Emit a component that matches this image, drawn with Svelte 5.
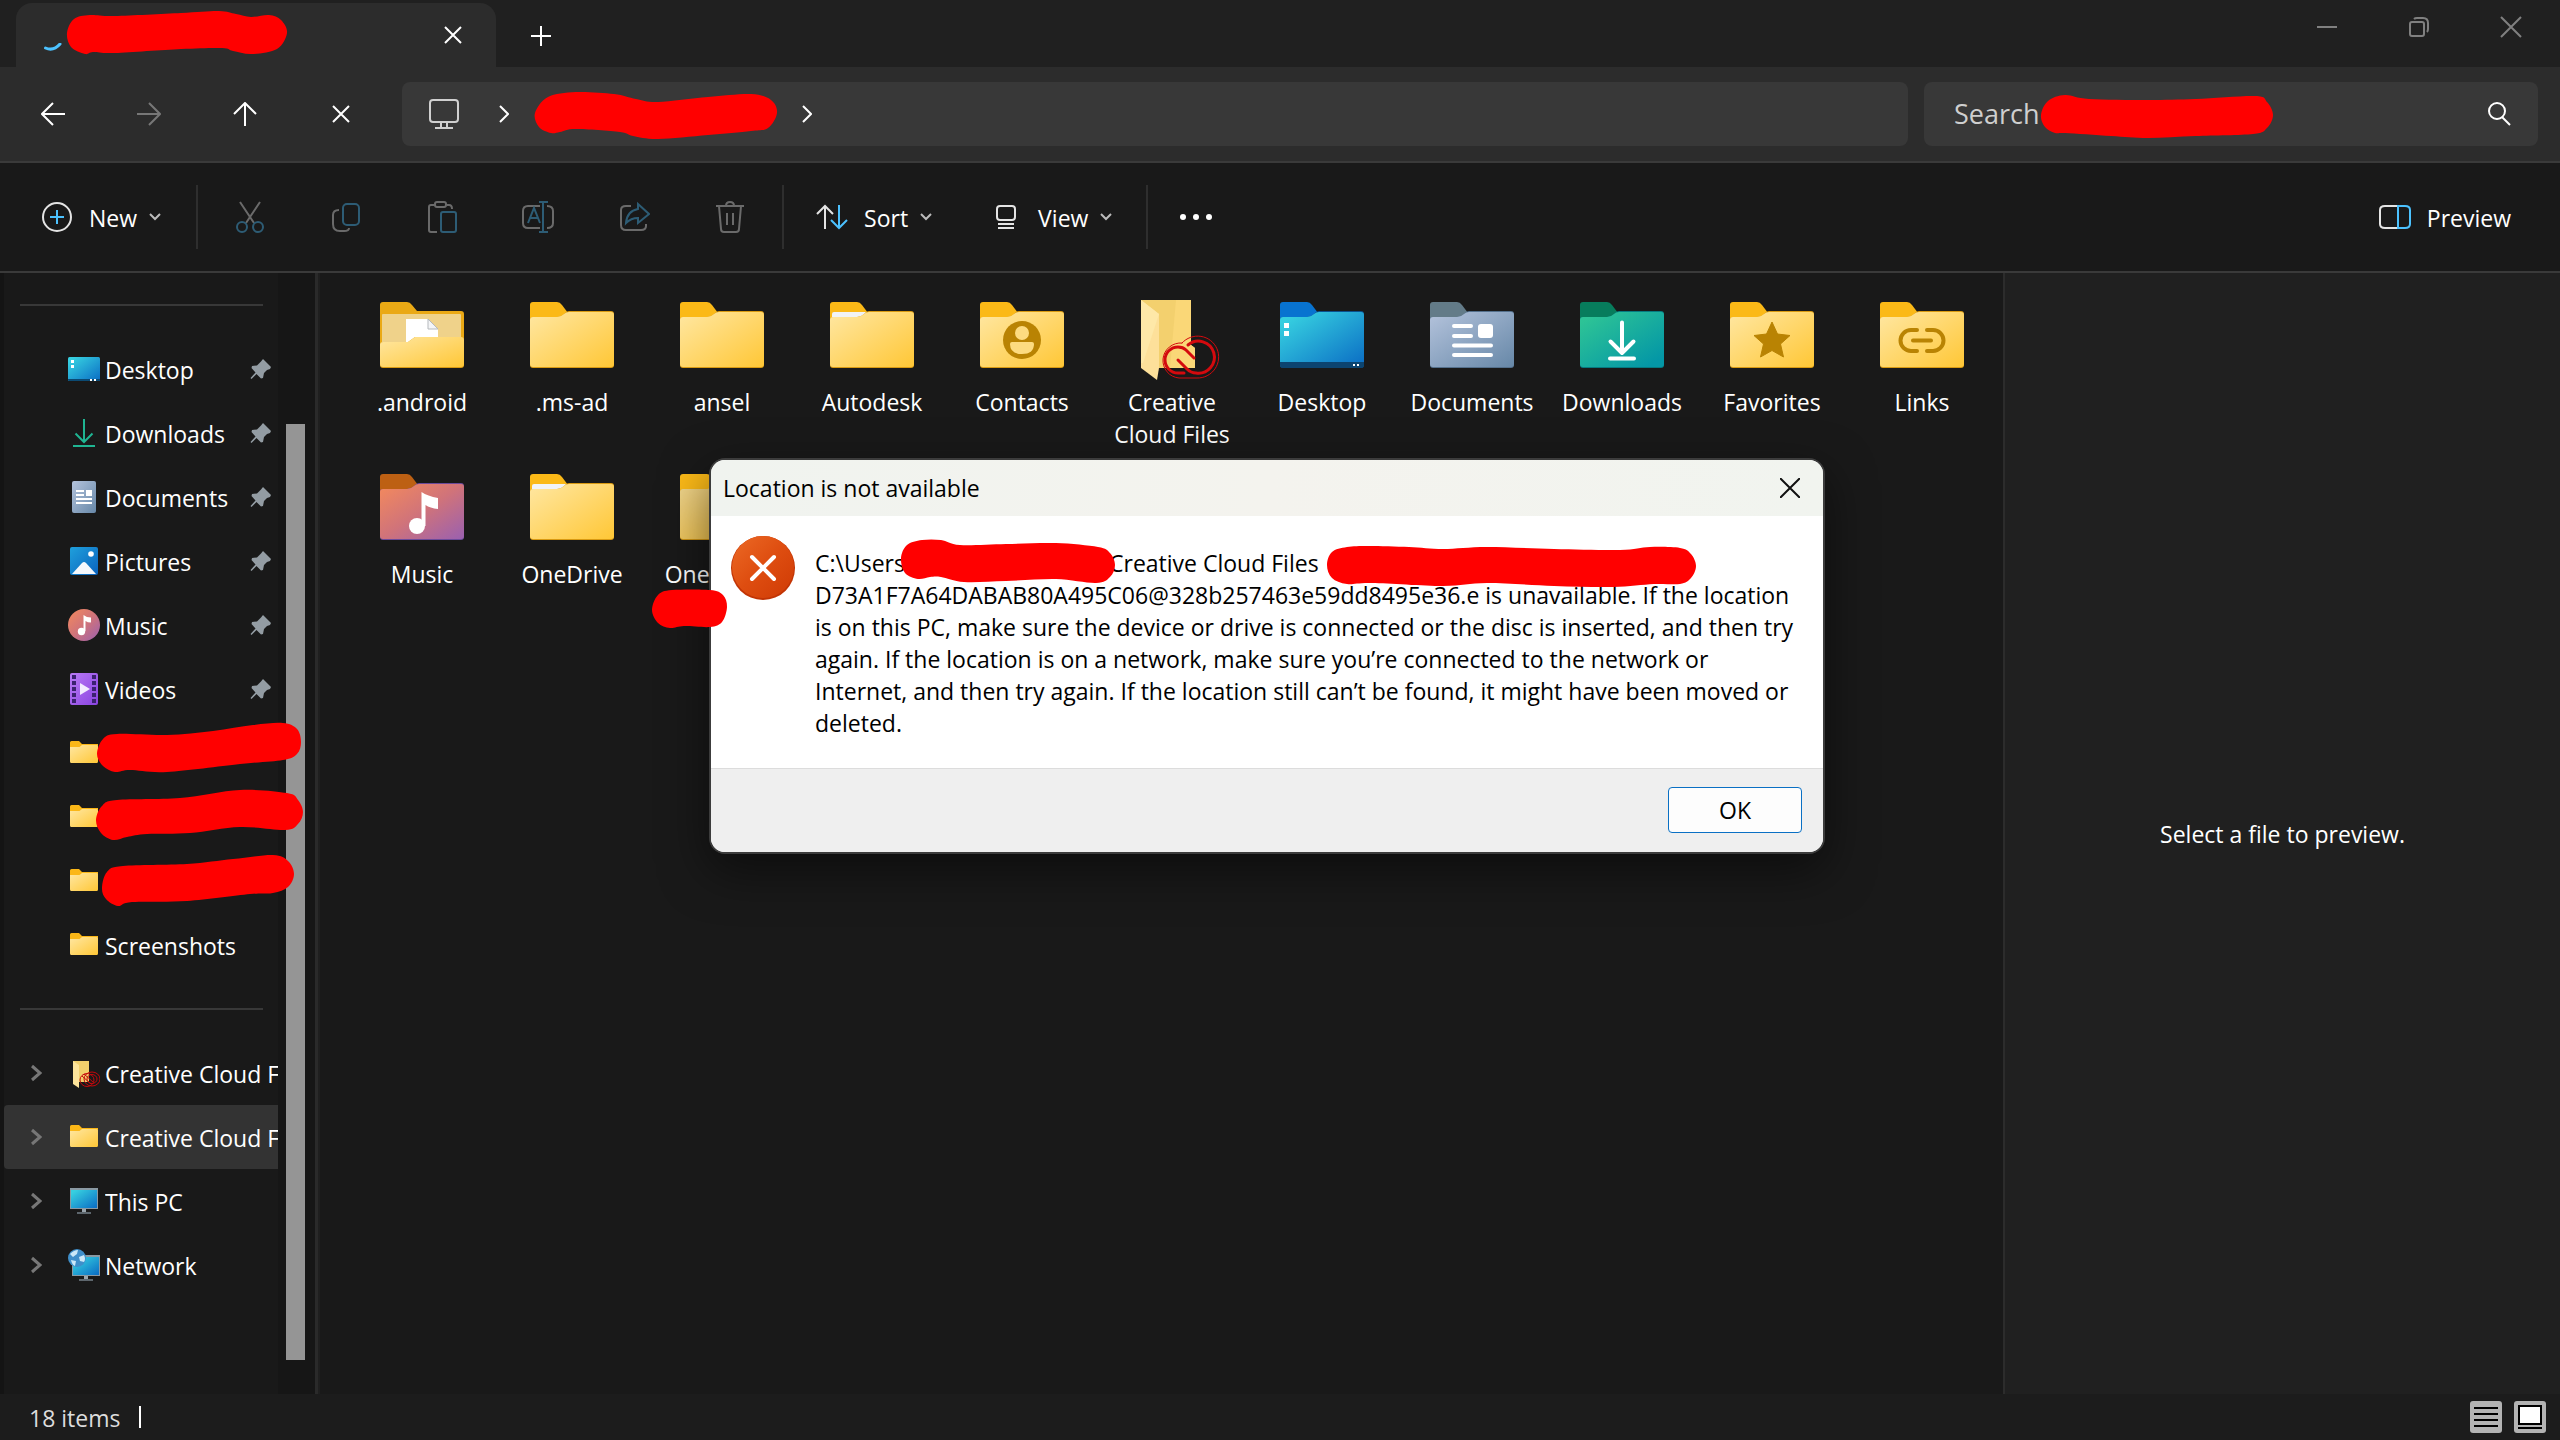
<script>
  let selected = $state("cc2");
  let showDialog = $state(true);

  const pinned = [
    { id: "desktop", label: "Desktop", icon: "desktop", pin: true },
    { id: "downloads", label: "Downloads", icon: "downloads", pin: true },
    { id: "documents", label: "Documents", icon: "documents", pin: true },
    { id: "pictures", label: "Pictures", icon: "pictures", pin: true },
    { id: "music", label: "Music", icon: "music", pin: true },
    { id: "videos", label: "Videos", icon: "videos", pin: true },
    { id: "hidden1", label: "", icon: "folder" },
    { id: "hidden2", label: "", icon: "folder" },
    { id: "hidden3", label: "", icon: "folder" },
    { id: "screenshots", label: "Screenshots", icon: "folder" },
  ];

  const drives = [
    { id: "cc1", label: "Creative Cloud Files", icon: "cloud" },
    { id: "cc2", label: "Creative Cloud Files", icon: "folder" },
    { id: "pc", label: "This PC", icon: "pc" },
    { id: "network", label: "Network", icon: "network" },
  ];

  const files = [
    { name: ".android", icon: "open" },
    { name: ".ms-ad", icon: "plain" },
    { name: "ansel", icon: "plain" },
    { name: "Autodesk", icon: "paper" },
    { name: "Contacts", icon: "contacts" },
    { name: "Creative Cloud Files", icon: "cloud" },
    { name: "Desktop", icon: "desktop" },
    { name: "Documents", icon: "documents" },
    { name: "Downloads", icon: "downloads" },
    { name: "Favorites", icon: "favorites" },
    { name: "Links", icon: "links" },
    { name: "Music", icon: "music" },
    { name: "OneDrive", icon: "paper" },
    { name: "OneDrive -", icon: "shade" },
  ];

  const folderColors = {
    desktop: ["#0873d0", "url(#g-desktop)", "#0a4f8c"],
    documents: ["#637b88", "url(#g-documents)", "#54708c"],
    downloads: ["#077c5c", "url(#g-downloads)", "#057a80"],
    music: ["#bd6013", "url(#g-music)", "#6b4a9a"],
  };

  // red marker strokes, outline points going clockwise
  const strokes = [
    [[67, 33], [74, 19], [90, 15], [115, 16], [181, 13], [219, 11], [236, 14], [251, 17], [269, 15], [281, 20], [287, 33], [277, 49], [252, 54], [233, 51], [222, 48], [181, 49], [115, 53], [93, 52], [85, 54], [71, 47]],
    [[535, 113], [548, 97], [576, 92], [614, 94], [636, 99], [658, 102], [708, 97], [751, 94], [771, 100], [777, 113], [768, 128], [751, 131], [708, 135], [658, 139], [633, 136], [620, 132], [576, 129], [560, 132], [551, 133], [539, 127]],
    [[2041, 115], [2048, 101], [2065, 95], [2089, 99], [2148, 100], [2196, 99], [2255, 96], [2267, 102], [2273, 115], [2267, 128], [2253, 134], [2196, 136], [2148, 138], [2111, 136], [2065, 133], [2055, 133], [2045, 127]],
    [[97, 754], [103, 739], [117, 734], [167, 735], [213, 731], [253, 725], [283, 723], [297, 729], [301, 742], [297, 754], [283, 760], [240, 764], [167, 772], [130, 770], [115, 772], [103, 766]],
    [[96, 820], [102, 806], [117, 800], [180, 798], [240, 790], [287, 793], [298, 800], [303, 812], [298, 824], [285, 830], [240, 827], [190, 833], [147, 834], [127, 837], [113, 840], [101, 833]],
    [[102, 888], [107, 872], [123, 866], [187, 864], [233, 859], [273, 855], [288, 861], [294, 874], [288, 887], [273, 893], [250, 894], [187, 901], [132, 902], [118, 906], [106, 899]],
    [[652, 610], [658, 595], [672, 590], [710, 590], [723, 595], [727, 607], [722, 622], [710, 627], [684, 626], [670, 628], [658, 623]],
    [[901, 558], [907, 545], [922, 540], [941, 540], [960, 545], [1006, 544], [1056, 543], [1098, 547], [1110, 553], [1115, 565], [1110, 577], [1096, 583], [1056, 579], [1006, 581], [964, 582], [941, 577], [930, 577], [918, 579], [905, 573]],
    [[1327, 565], [1332, 552], [1347, 547], [1369, 546], [1409, 547], [1443, 549], [1487, 547], [1554, 549], [1620, 550], [1650, 547], [1680, 548], [1691, 554], [1696, 566], [1691, 578], [1680, 584], [1654, 584], [1613, 587], [1554, 586], [1487, 583], [1443, 586], [1372, 583], [1347, 584], [1332, 578]],
  ];

  // closed Catmull-Rom curve through the points
  function smooth(pts) {
    const n = pts.length;
    let d = `M${pts[0]}`;
    for (let i = 0; i < n; i++) {
      const [a, b, c, e] = [pts[(i + n - 1) % n], pts[i], pts[(i + 1) % n], pts[(i + 2) % n]];
      const c1 = [b[0] + (c[0] - a[0]) / 6, b[1] + (c[1] - a[1]) / 6];
      const c2 = [c[0] - (e[0] - b[0]) / 6, c[1] - (e[1] - b[1]) / 6];
      d += `C${c1} ${c2} ${c}`;
    }
    return d + "Z";
  }
</script>

<svelte:head>
  <title>File Explorer</title>
</svelte:head>

{#snippet chevronDown()}
  <svg class="caret" viewBox="0 0 12 8"><path d="M1 1l5 5 5-5" /></svg>
{/snippet}

{#snippet sideIcon(kind)}
  <svg class="side-icon" viewBox="0 0 32 32">
    {#if kind === "desktop"}
      <rect y="4" width="32" height="24" rx="1.5" fill="url(#g-desktop)" />
      <path d="M0 26h32v.5a1.500 1.500 0 0 1-1.500 1.500h-29A1.500 1.500 0 0 1 0 26.500z" fill="#0b4a73" />
      <path d="M3 7h3v3H3zM3 12h3v3H3zM22 26h2v2h-2zM26 26h2v2h-2z" fill="#fff" />
    {:else if kind === "downloads"}
      <path d="M16 2v22M7.500 16.500L16 25l8.500-8.500M5 29h22" fill="none" stroke="#1fb592" stroke-width="2" />
    {:else if kind === "documents"}
      <rect x="4" width="24" height="32" rx="2" fill="url(#g-documents)" />
      <path d="M8 9h8v2H8zM8 13h8v2H8zM18 9h6v6h-6zM8 17h16v2H8zM8 21h16v2H8z" fill="#fff" />
    {:else if kind === "pictures"}
      <rect x="2" y="2" width="28" height="28" rx="2" fill="url(#g-pictures)" />
      <path d="M4 29l10-11q2-2 4 0l10 11z" fill="#f4f8fc" />
      <circle cx="23" cy="9" r="2.800" fill="#fff" />
    {:else if kind === "music"}
      <circle cx="16" cy="16" r="16" fill="url(#g-music)" />
      <circle cx="13.500" cy="22.500" r="3.700" fill="#fff" />
      <path d="M15.500 22V6q3 2.500 7.500 2.500v5q-3.500 0-5.500-1.500v10z" fill="#fff" />
    {:else if kind === "videos"}
      <rect x="2" width="28" height="32" rx="2" fill="url(#g-videos)" />
      <path d="M4 2h4v4H4zM4 8h4v4H4zM4 14h4v4H4zM4 20h4v4H4zM4 26h4v4H4zM24 2h4v4h-4zM24 8h4v4h-4zM24 14h4v4h-4zM24 20h4v4h-4zM24 26h4v4h-4z" fill="#3b2170" />
      <path d="M12 10l10 6-10 6z" fill="#f3ecff" />
    {:else if kind === "cloud"}
      <path d="M5 4h16v21H5z" fill="#f1cf6c" />
      <path d="M5 4l6 4v23l-6-4z" fill="#fde49b" />
      <g fill="none" stroke="#c4080c" stroke-width="1">
        <ellipse cx="19" cy="23" rx="7" ry="6.500" />
        <ellipse cx="24" cy="22" rx="8" ry="7" />
        <ellipse cx="24" cy="22" rx="5" ry="4.500" />
        <path d="M14 19l9 8M16 17l9 8" />
      </g>
    {:else if kind === "pc"}
      <path d="M2 3h28v21H2z" fill="#8a99a3" />
      <path d="M3 5h26v18H3z" fill="url(#g-desktop)" />
      <path d="M14 24h4v3h-4z" fill="#9aa5ad" />
      <path d="M9 27h14v2H9z" fill="#5d666d" />
    {:else if kind === "network"}
      <path d="M4 6h28v21H4z" fill="#8a99a3" />
      <path d="M5 8h26v18H5z" fill="url(#g-desktop)" />
      <path d="M16 27h4v3h-4z" fill="#9aa5ad" />
      <path d="M11 30h14v2H11z" fill="#5d666d" />
      <circle cx="9" cy="9" r="9" fill="#3f8fca" />
      <path d="M2 5q4-4 8-4l-1 4-4 3zM11 8l5-2q2 4 0 7l-4-1zM3 11l5 1-1 5q-3-1-4-6z" fill="#cbe8f8" />
    {:else}
      <path d="M2 5.500A1.500 1.500 0 0 1 3.500 4H11l3 3h16v6H2z" fill="#fbb717" />
      <path d="M2 10h9.500L14 8h14.500A1.500 1.500 0 0 1 30 9.500v15a1.500 1.500 0 0 1-1.500 1.500h-25A1.500 1.500 0 0 1 2 24.500z" fill="url(#g-folder)" />
    {/if}
  </svg>
{/snippet}

{#snippet fileIcon(kind)}
  {@const [back, front, edge] = folderColors[kind] ?? ["#fbb917", "url(#g-folder)", "#d99a12"]}
  <svg class="file-icon" viewBox="0 0 96 96">
    {#if kind === "cloud"}
      <path d="M17 13h50v45l4 3v20H17z" fill="#f3d06e" />
      <path d="M52 13h15v45l4 3v20H46z" fill="#fad777" />
      <path d="M17 13l18 14v54l-2 12-16-12z" fill="#fde09a" />
      <path d="M17 13l18 14L19 76h-2z" fill="#fee8a8" />
      <g fill="none" stroke="#d40a0e" stroke-linecap="round">
        <path d="M58 56a21 21 0 1 1 15 35H55a17.500 17.500 0 1 1 3-35" stroke-width="1" />
        <path d="M64 58a16 16 0 1 1 8 28q-5 0-9-4L54 73" stroke-width="3" />
        <path d="M70 71l-8-8q-3-3-8-3a12.500 12.500 0 0 0 0 26h6" stroke-width="3" />
      </g>
    {:else if kind === "open"}
      <path d="M6 18a3 3 0 0 1 3-3h24q3 0 5 3l5 6h44a3 3 0 0 1 3 3v51H6z" fill="#eaa915" />
      <path d="M8 28a1 1 0 0 1 1-1h77a1 1 0 0 1 1 1v30H8z" fill="#efd28a" />
      <path d="M32 32h22l10 10v20H32z" fill="#fff" />
      <path d="M54 32v10h10z" fill="#f4f5f6" stroke="#b5b9bd" />
      <path d="M6 58q0-3 3-3h25l7-5h46a3 3 0 0 1 3 3v25a3 3 0 0 1-3 3H9a3 3 0 0 1-3-3z" fill={edge} />
      <path d="M6 58q0-3 3-3h25l7-5h46a3 3 0 0 1 3 3v24a3 3 0 0 1-3 3H9a3 3 0 0 1-3-3z" fill={front} />
    {:else}
      <path d="M6 18a3 3 0 0 1 3-3h24q3 0 5 3l6 8-4 8H6z" fill={back} />
      {#if kind === "paper"}
        <path d="M8 27q0-2 2-2h34l-4 8H8z" fill="#f1f3f6" />
      {/if}
      <path d="M6 33q0-3 3-3h24q4 0 7-3 2-3 5-3h42a3 3 0 0 1 3 3v51a3 3 0 0 1-3 3H9a3 3 0 0 1-3-3z" fill={edge} />
      <path d="M6 33q0-3 3-3h24q4 0 7-3 2-2 5-2h42a3 3 0 0 1 3 3v49a3 3 0 0 1-3 3H9a3 3 0 0 1-3-3z" fill={front} />
      {#if kind === "contacts"}
        <circle cx="48" cy="53" r="19" fill="#b98303" />
        <circle cx="48" cy="46" r="7" fill="#fddb80" />
        <path d="M36 57q0-2 2-2h20q2 0 2 2 0 10-12 10t-12-10z" fill="#fddb80" />
      {:else if kind === "desktop"}
        <path d="M6 75h84v3a3 3 0 0 1-3 3H9a3 3 0 0 1-3-3z" fill="#0c4470" />
        <path d="M10 36h5v5h-5zM10 44h5v5h-5zM79 77h2v2h-2zM83 77h2v2h-2z" fill="#fff" />
      {:else if kind === "documents"}
        <path d="M30 39h17M30 49h17M30 58.500h37M30 68h37" stroke="#fff" stroke-width="4" stroke-linecap="round" />
        <rect x="54" y="37" width="15" height="14" rx="3" fill="#fff" />
      {:else if kind === "downloads"}
        <path d="M48 35.500V66M36.500 54.500L48 66l11.500-11.500M36 71.500h24" fill="none" stroke="#fff" stroke-width="4" stroke-linecap="round" stroke-linejoin="round" />
      {:else if kind === "favorites"}
        <path d="M48 35l5.500 12 12.500 1.500-9.500 8.500 3 13L48 63.500 36.500 70l3-13-9.500-8.500L42.500 47z" fill="#b98303" stroke="#b98303" stroke-linejoin="round" />
      {:else if kind === "links"}
        <path d="M43 43h-6a10.500 10.500 0 0 0 0 21h6M53 43h6a10.500 10.500 0 0 1 0 21h-6M39 53.500h18" fill="none" stroke="#b98303" stroke-width="4" stroke-linecap="round" />
      {:else if kind === "music"}
        <circle cx="43" cy="67" r="8" fill="#fff" />
        <path d="M47.500 67V33q6 4 16.500 6v11q-8-1-12.500-4v21z" fill="#fff" />
      {:else if kind === "shade"}
        <path d="M6 33q0-3 3-3h27v51H9a3 3 0 0 1-3-3z" fill="#8a6a20" opacity=".15" />
      {/if}
    {/if}
  </svg>
{/snippet}

{#snippet navItem(item, expandable)}
  <li>
    <button class="nav-item" class:selected={selected === item.id} onclick={() => (selected = item.id)} aria-label={item.label || "Folder"}>
      <span class="expander">
        {#if expandable}
          <svg viewBox="0 0 14 20"><path d="M2 3l8 7-8 7" /></svg>
        {/if}
      </span>
      {@render sideIcon(item.icon)}
      <span class="nav-label">{item.label}</span>
      {#if item.pin}
        <svg class="pin" viewBox="0 0 22 22"><path d="M13 1l8 8-1 2-3 1-3 3-1 5-2 .5L6.500 16 1.500 21l-1-1 5-5.500L1.500 10l.5-2 5-.5 4-4z" /></svg>
      {/if}
    </button>
  </li>
{/snippet}

<svg class="defs" aria-hidden="true">
  <defs>
    <linearGradient id="g-folder" x1="0" y1="0" x2="1" y2="1">
      <stop offset="0" stop-color="#ffe7a2" /><stop offset="1" stop-color="#ffc736" />
    </linearGradient>
    <linearGradient id="g-desktop" x1="0" y1="0" x2="1" y2="1">
      <stop offset="0.100" stop-color="#36cfe0" /><stop offset="1" stop-color="#0a6cc4" />
    </linearGradient>
    <linearGradient id="g-documents" x1="0" y1="0" x2="1" y2="1">
      <stop offset="0" stop-color="#b4c3dc" /><stop offset="1" stop-color="#6788a8" />
    </linearGradient>
    <linearGradient id="g-downloads" x1="0" y1="0" x2="1" y2="1">
      <stop offset="0.100" stop-color="#2dc396" /><stop offset="0.900" stop-color="#0497a6" />
    </linearGradient>
    <linearGradient id="g-music" x1="0" y1="0" x2="1" y2="1">
      <stop offset="0" stop-color="#f48a5c" /><stop offset="0.500" stop-color="#d0737a" /><stop offset="1" stop-color="#9a60b0" />
    </linearGradient>
    <linearGradient id="g-pictures" x1="0" y1="0" x2="1" y2="1">
      <stop offset="0" stop-color="#1fa0dc" /><stop offset="1" stop-color="#0a62bd" />
    </linearGradient>
    <linearGradient id="g-videos" x1="0" y1="0" x2="1" y2="1">
      <stop offset="0" stop-color="#b97af5" /><stop offset="1" stop-color="#8a44e0" />
    </linearGradient>
    <linearGradient id="g-error" x1="0" y1="0" x2="1" y2="1">
      <stop offset="0" stop-color="#ec6a25" /><stop offset="0.500" stop-color="#de4d10" /><stop offset="1" stop-color="#cf3a05" />
    </linearGradient>
  </defs>
</svg>

<div class="window">
  <header class="titlebar">
    <div class="tab">
      <svg class="spinner" viewBox="0 0 18 8"><path d="M1.500 5q8 3.500 14.500-4" /></svg>
      <button class="tab-close" aria-label="Close tab">
        <svg viewBox="0 0 18 18"><path d="M1 1l16 16M17 1L1 17" /></svg>
      </button>
    </div>
    <button class="new-tab" aria-label="New tab">
      <svg viewBox="0 0 22 22"><path d="M11 1v20M1 11h20" /></svg>
    </button>
    <div class="controls">
      <button aria-label="Minimize"><svg viewBox="0 0 20 20"><path d="M0 10h20" /></svg></button>
      <button aria-label="Restore">
        <svg viewBox="0 0 20 20"><rect x="1" y="5" width="14" height="14" rx="2" /><path d="M5 2q1-1 3-1h6q5 0 5 5v6q0 2-1 3" /></svg>
      </button>
      <button aria-label="Close"><svg viewBox="0 0 20 20"><path d="M0 0l20 20M20 0L0 20" /></svg></button>
    </div>
  </header>

  <nav class="address-row">
    <button aria-label="Back"><svg viewBox="0 0 24 24"><path d="M24 12H1M12 1L1 12l11 11" /></svg></button>
    <button class="off" aria-label="Forward" disabled><svg viewBox="0 0 24 24"><path d="M0 12h23M12 1l11 11-11 11" /></svg></button>
    <button aria-label="Up"><svg viewBox="0 0 24 24"><path d="M12 24V1M1 12L12 1l11 11" /></svg></button>
    <button aria-label="Stop"><svg viewBox="0 0 24 24"><path d="M4 4l16 16M20 4L4 20" /></svg></button>
    <div class="address">
      <svg class="monitor" viewBox="0 0 30 30"><rect x="1" y="1" width="28" height="22" rx="3" /><path d="M12 24v5M18 24v5M6 29h18" /></svg>
      <svg class="crumb" viewBox="0 0 10 18"><path d="M1 1l8 8-8 8" /></svg>
      <span class="crumb-name"></span>
      <svg class="crumb" viewBox="0 0 10 18"><path d="M1 1l8 8-8 8" /></svg>
    </div>
    <label class="search">
      <input type="text" placeholder="Search" aria-label="Search" />
      <svg viewBox="0 0 24 24"><circle cx="10" cy="9" r="8" /><path d="M15 15l8 8" /></svg>
    </label>
  </nav>

  <div class="commands">
    <button class="menu">
      <svg class="cmd" viewBox="0 0 32 32"><circle cx="16" cy="16" r="14" /><path class="blue" d="M16 9v14M9 16h14" /></svg>
      <span>New</span>
      {@render chevronDown()}
    </button>
    <i class="sep"></i>
    <button class="tool" aria-label="Cut" disabled>
      <svg class="cmd" viewBox="0 0 32 32"><path d="M6 1l14 21M26 1L12 22" /><circle class="blue" cx="8" cy="26" r="5" /><circle class="blue" cx="24" cy="26" r="5" /></svg>
    </button>
    <button class="tool" aria-label="Copy" disabled>
      <svg class="cmd" viewBox="0 0 32 32"><rect class="blue" x="13" y="3" width="16" height="21" rx="4" /><path d="M9 9q-6 0-6 5v9q0 7 7 7h4q5 0 5-3" /></svg>
    </button>
    <button class="tool" aria-label="Paste" disabled>
      <svg class="cmd" viewBox="0 0 32 32"><path d="M9 4H5q-2 0-2 2v23q0 2 2 2h6M21 4h2q3 0 3 4" /><rect x="9" y="1" width="11" height="5" rx="2" /><rect class="blue" x="15" y="11" width="15" height="20" rx="2" /></svg>
    </button>
    <button class="tool" aria-label="Rename" disabled>
      <svg class="cmd" viewBox="0 0 32 32"><path d="M18 5H6Q1 5 1 10v12q0 5 5 5h12M25 5q6 0 6 5v12q0 5-6 5" /><path class="blue" d="M21 1v30M17 1h9M17 31h9M6 22l6-15 6 15M8 17h8" /></svg>
    </button>
    <button class="tool" aria-label="Share" disabled>
      <svg class="cmd" viewBox="0 0 32 32"><path d="M13 5H8Q3 5 3 9v15q0 5 5 5h15q5 0 5-4v-2" /><path class="blue" d="M20 3l11 10-11 9v-5q-7 0-12 5 1-12 12-14z" /></svg>
    </button>
    <button class="tool" aria-label="Delete" disabled>
      <svg class="cmd" viewBox="0 0 32 32"><path d="M2 5h28M12 5q0-4 4-4t4 4M5 5l2 23q0 3 3 3h12q3 0 3-3l2-23M13 12v12M19 12v12" /></svg>
    </button>
    <i class="sep"></i>
    <button class="menu">
      <svg class="cmd" viewBox="0 0 32 32"><path d="M9 28V5M1 13l8-8 8 8" /><path class="blue" d="M23 4v23M15 19l8 8 8-8" /></svg>
      <span>Sort</span>
      {@render chevronDown()}
    </button>
    <button class="menu">
      <svg class="cmd" viewBox="0 0 32 32"><rect x="7" y="5" width="18" height="14" rx="3" /><path d="M8 23h16M8 27h16" /></svg>
      <span>View</span>
      {@render chevronDown()}
    </button>
    <i class="sep"></i>
    <button class="more" aria-label="See more">
      <svg class="cmd" viewBox="0 0 32 32"><circle cx="3" cy="16" r="3" /><circle cx="16" cy="16" r="3" /><circle cx="29" cy="16" r="3" /></svg>
    </button>
    <button class="preview-toggle">
      <svg class="cmd" viewBox="0 0 32 32"><path d="M19 5H6Q1 5 1 9v14q0 4 5 4h13" /><path class="blue" d="M19 5h7q5 0 5 4v14q0 4-5 4h-7z" /></svg>
      <span>Preview</span>
    </button>
  </div>

  <div class="body">
    <aside>
      <ul class="nav">
        <li class="rule"></li>
        {#each pinned as item (item.id)}
          {@render navItem(item, false)}
        {/each}
        <li class="rule"></li>
        {#each drives as item (item.id)}
          {@render navItem(item, true)}
        {/each}
      </ul>
      <div class="scroll"><div class="thumb"></div></div>
    </aside>

    <main>
      <ul class="files">
        {#each files as file}
          <li>
            <button class="file">
              {@render fileIcon(file.icon)}
              <span>{file.name}</span>
            </button>
          </li>
        {/each}
      </ul>
    </main>

    <section class="preview">
      <p>Select a file to preview.</p>
    </section>
  </div>

  <footer class="status">
    <span>18 items</span>
    <i class="cursor"></i>
    <button aria-label="Details view">
      <svg viewBox="0 0 32 32"><rect width="32" height="32" rx="3" fill="#b3b3b3" /><path d="M4 7h24M4 13h24M4 19h24M4 25h24" stroke="#000" stroke-width="2" /></svg>
    </button>
    <button aria-label="Large icons view">
      <svg viewBox="0 0 32 32"><rect width="32" height="32" rx="3" fill="#b3b3b3" /><rect x="5" y="5" width="22" height="18" fill="#fff" stroke="#000" stroke-width="2" /><path d="M4 27h24" stroke="#000" stroke-width="2" /></svg>
    </button>
  </footer>

  {#if showDialog}
    <div class="dialog" role="alertdialog" aria-labelledby="dialog-title" aria-describedby="dialog-text">
      <div class="dialog-head">
        <span id="dialog-title">Location is not available</span>
        <button aria-label="Close" onclick={() => (showDialog = false)}>
          <svg viewBox="0 0 20 20"><path d="M0 0l20 20M20 0L0 20" /></svg>
        </button>
      </div>
      <div class="dialog-body">
        <svg class="error" viewBox="0 0 64 64">
          <circle cx="32" cy="32" r="32" fill="#c23404" />
          <circle cx="32" cy="31" r="31" fill="url(#g-error)" />
          <path d="M21 21l22 22M43 21L21 43" stroke="#fff" stroke-width="4" stroke-linecap="round" />
        </svg>
        <p id="dialog-text">
          <span class="path"><span class="user">C:\Users\</span>Creative Cloud Files</span>
          D73A1F7A64DABAB80A495C06@328b257463e59dd8495e36.e is unavailable. If the location<br />
          is on this PC, make sure the device or drive is connected or the disc is inserted, and then try<br />
          again. If the location is on a network, make sure you’re connected to the network or<br />
          Internet, and then try again. If the location still can’t be found, it might have been moved or<br />
          deleted.
        </p>
      </div>
      <div class="dialog-foot">
        <button onclick={() => (showDialog = false)}>OK</button>
      </div>
    </div>
  {/if}

  <svg class="marker" aria-hidden="true">
    {#each strokes as pts}
      <path d={smooth(pts)} />
    {/each}
  </svg>
</div>

<style>
  :global(body) {
    margin: 0;
    background: #191919;
  }

  .window {
    position: relative;
    display: flex;
    flex-direction: column;
    min-height: 100vh;
    overflow: hidden;
    color: #fff;
    background: #191919;
    font-family: "Open Sans", "Noto Sans", sans-serif;
    font-size: 23px;
    line-height: 32px;
  }

  button {
    display: flex;
    align-items: center;
    justify-content: center;
    padding: 0;
    border: none;
    background: none;
    color: inherit;
    font: inherit;
  }

  ul {
    margin: 0;
    padding: 0;
    list-style: none;
  }

  svg {
    flex: none;
  }

  .defs {
    position: absolute;
    width: 0;
    height: 0;
  }

  .titlebar {
    display: flex;
    height: 67px;
    background: #202020;

    svg {
      fill: none;
      stroke: #fff;
      stroke-width: 2;
    }
  }

  .tab {
    display: flex;
    align-items: center;
    justify-content: space-between;
    width: 480px;
    margin: 3px 0 0 16px;
    padding: 0 34px 0 28px;
    box-sizing: border-box;
    border-radius: 16px 16px 0 0;
    background: #2c2c2c;

    .spinner {
      width: 18px;
      height: 8px;
      align-self: flex-end;
      margin-bottom: 16px;
      stroke: #4cc2ff;
      stroke-width: 3;
      stroke-linecap: round;
    }

    .tab-close svg {
      width: 18px;
      height: 18px;
    }
  }

  .new-tab {
    width: 90px;
    height: 72px;

    svg {
      width: 22px;
      height: 22px;
    }
  }

  .controls {
    display: flex;
    height: 54px;
    margin-left: auto;
    padding-right: 3px;

    button {
      width: 92px;
    }

    svg {
      width: 20px;
      height: 20px;
      stroke: #808080;
      overflow: visible;
    }
  }

  .address-row {
    display: flex;
    align-items: center;
    height: 94px;
    padding: 0 22px 0 5px;
    border-bottom: 2px solid #3a3a3a;
    background: #2c2c2c;

    svg {
      fill: none;
      stroke: #fff;
      stroke-width: 2;
    }

    > button {
      width: 96px;
      height: 64px;
    }

    > button svg {
      width: 24px;
      height: 24px;
    }

    .off svg {
      stroke: #777;
    }
  }

  .address,
  .search {
    display: flex;
    align-items: center;
    height: 64px;
    box-sizing: border-box;
    border-radius: 8px;
    background: #383838;
  }

  .address {
    flex: 1;
    margin: 0 16px 0 13px;
    padding-left: 27px;

    .monitor {
      width: 30px;
      height: 30px;
      margin-right: 40px;
      stroke: #d0d0d0;
    }

    .crumb {
      width: 10px;
      height: 18px;
    }
  }

  .crumb-name {
    width: 293px;
  }

  .search {
    flex: 0 0 614px;
    padding: 0 27px 0 30px;

    input {
      flex: 1;
      min-width: 0;
      padding: 0;
      border: none;
      outline: none;
      background: none;
      color: #fff;
      font: inherit;
      font-size: 27px;
    }

    input::placeholder {
      color: #cfcfcf;
      opacity: 1;
    }

    svg {
      width: 24px;
      height: 24px;
    }
  }

  .commands {
    display: flex;
    align-items: center;
    height: 108px;
    border-bottom: 2px solid #3a3a3a;

    button {
      height: 72px;
    }

    span {
      padding-top: 2px;
    }

    .menu {
      gap: 12px;
      padding: 0 30px 0 28px;
    }

    .menu:first-child {
      padding: 0 31px 0 41px;
    }

    .menu .cmd {
      margin-right: 4px;
    }

    .tool {
      width: 96px;
    }

    .tool .cmd {
      opacity: 0.4;
    }

    .more {
      width: 88px;
    }

    .more .cmd {
      fill: #fff;
      stroke: none;
    }

    .preview-toggle {
      gap: 16px;
      margin-left: auto;
      padding-right: 49px;
    }
  }

  .cmd {
    width: 32px;
    height: 32px;
    fill: none;
    stroke: #e4e4e4;
    stroke-width: 2;

    .blue {
      stroke: #4cc2ff;
    }
  }

  .caret {
    width: 12px;
    height: 8px;
    fill: none;
    stroke: #bbb;
    stroke-width: 2;
  }

  .sep {
    width: 2px;
    height: 64px;
    margin: 0 4px;
    background: #2e2e2e;
  }

  .body {
    display: flex;
    flex: 1;
  }

  aside {
    display: flex;
    width: 320px;
    box-sizing: border-box;
    border-left: 4px solid #141414;
    border-right: 2px solid #1f1f1f;
  }

  .nav {
    width: 274px;
  }

  .rule {
    display: flex;
    align-items: center;
    height: 64px;
    padding: 0 15px 0 16px;
  }

  .rule::before {
    content: "";
    flex: 1;
    height: 2px;
    background: #383838;
  }

  .nav-item {
    justify-content: flex-start;
    width: 100%;
    height: 64px;
    padding-right: 6px;
    overflow: hidden;
    border-radius: 4px 0 0 4px;
    text-align: left;

    &.selected {
      background: #333;
    }
  }

  .expander {
    display: flex;
    flex: none;
    width: 38px;
    padding-left: 26px;

    svg {
      width: 14px;
      height: 20px;
      fill: none;
      stroke: #777;
      stroke-width: 3;
    }
  }

  .side-icon {
    width: 32px;
    height: 32px;
  }

  .nav-label {
    flex: 1;
    margin-left: 5px;
    padding-top: 2px;
    overflow: hidden;
    white-space: nowrap;
  }

  li:nth-last-child(-n + 4) .nav-item {
    padding-right: 0;
  }

  .pin {
    width: 22px;
    height: 22px;
    fill: #939ca3;
  }

  .scroll {
    display: flex;
    flex: 1;
    padding: 151px 0 34px 8px;
    border-right: 3px solid #2a2a2a;
    background: #161616;
  }

  .thumb {
    width: 19px;
    background: #959595;
  }

  main {
    flex: 1;
    padding: 14px 0 0 27px;
  }

  .files {
    display: grid;
    grid-template-columns: repeat(auto-fill, 150px);
    row-gap: 9px;
  }

  .file {
    flex-direction: column;
    gap: 3px;
    width: 150px;
    padding: 0 12px;

    span {
      white-space: normal;
    }
  }

  .file-icon {
    width: 96px;
    height: 96px;
  }

  .preview {
    display: flex;
    align-items: center;
    justify-content: center;
    width: 555px;
    border-left: 2px solid #2c2c2c;
    background: #202020;

    p {
      margin: 0;
    }
  }

  .status {
    display: flex;
    align-items: center;
    gap: 12px;
    height: 46px;
    padding: 0 14px 0 29px;
    background: #1c1c1c;
    color: #ddd;

    span {
      padding-top: 2px;
    }

    .cursor {
      width: 2px;
      height: 22px;
      margin: 0 auto 0 7px;
      background: #fff;
    }

    svg {
      width: 32px;
      height: 32px;
    }
  }

  .dialog {
    position: absolute;
    top: 458px;
    left: 709px;
    width: 1112px;
    overflow: hidden;
    border: 2px solid #3c3c3c;
    border-radius: 16px;
    background: #fff;
    box-shadow: 0 16px 48px rgba(0, 0, 0, 0.5);
    color: #000;
  }

  .dialog-head {
    display: flex;
    align-items: center;
    justify-content: space-between;
    height: 56px;
    padding: 0 23px 0 12px;
    background: linear-gradient(90deg, #f0f3ef, #f4f3ee 50%, #f1f4ef);

    svg {
      width: 20px;
      height: 20px;
      stroke: #111;
      stroke-width: 2;
    }
  }

  .dialog-body {
    display: flex;
    gap: 20px;
    padding: 20px;

    p {
      margin: 11px 0 9px;
      white-space: nowrap;
    }
  }

  .error {
    width: 64px;
    height: 64px;
  }

  .path {
    display: flex;
  }

  .user {
    width: 294px;
  }

  .dialog-foot {
    display: flex;
    justify-content: flex-end;
    padding: 18px 21px 19px;
    border-top: 1px solid #dcdcdc;
    background: #efefef;

    button {
      width: 134px;
      height: 46px;
      border: 1px solid #0a70c4;
      border-radius: 4px;
      background: #fdfdfd;
    }
  }

  .marker {
    position: absolute;
    inset: 0;
    width: 100%;
    height: 100%;
    fill: #f00;
    pointer-events: none;
  }
</style>
